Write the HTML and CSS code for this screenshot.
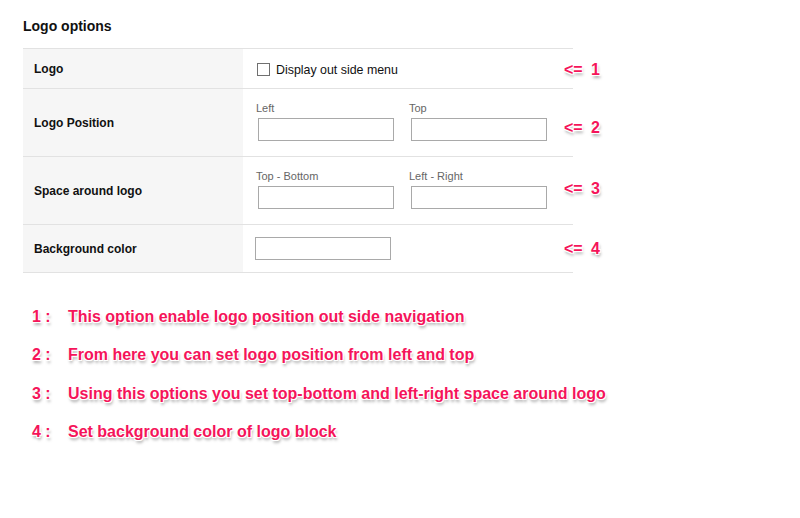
FILE: index.html
```html
<!DOCTYPE html>
<html>
<head>
<meta charset="utf-8">
<link rel="stylesheet" href="styles.css">
</head>
<body>
<div class="page">
  <h2 class="title">Logo options</h2>
  <div class="table">
    <div class="row row-sm">
      <div class="label">Logo</div>
      <div class="cell cell-center">
        <span class="check"></span>
        <span class="check-text">Display out side menu</span>
        <span class="arrow arrow-1">&lt;= <b>1</b></span>
      </div>
    </div>
    <div class="row row-lg">
      <div class="label">Logo Position</div>
      <div class="cell cell-fields">
        <div class="field"><span class="flabel">Left</span><span class="input"></span></div>
        <div class="field"><span class="flabel">Top</span><span class="input"></span></div>
        <span class="arrow arrow-2">&lt;= <b>2</b></span>
      </div>
    </div>
    <div class="row row-lg">
      <div class="label">Space around logo</div>
      <div class="cell cell-fields">
        <div class="field"><span class="flabel">Top - Bottom</span><span class="input"></span></div>
        <div class="field"><span class="flabel">Left - Right</span><span class="input"></span></div>
        <span class="arrow arrow-3">&lt;= <b>3</b></span>
      </div>
    </div>
    <div class="row row-md">
      <div class="label">Background color</div>
      <div class="cell cell-center cell-tight">
        <span class="input"></span>
        <span class="arrow arrow-4">&lt;= <b>4</b></span>
      </div>
    </div>
  </div>
  <div class="notes">
    <div class="note"><span class="num">1 :</span>This option enable logo position out side navigation</div>
    <div class="note"><span class="num">2 :</span>From here you can set logo position from left and top</div>
    <div class="note"><span class="num">3 :</span>Using this options you set top-bottom and left-right space around logo</div>
    <div class="note"><span class="num">4 :</span>Set background color of logo block</div>
  </div>
</div>
</body>
</html>
```

FILE: styles.css
```css
* { box-sizing: border-box; }
html, body { margin: 0; padding: 0; background: #fff; }
body { font-family: "Liberation Sans", Arial, sans-serif; color: #111; }
.page { padding: 18px 0 0 23px; }
.title { margin: 0 0 13px; font-size: 14px; line-height: 17px; font-weight: bold; color: #111; }
.table { width: 550px; border-top: 1px solid #e2e2e2; }
.row { display: flex; border-bottom: 1px solid #e2e2e2; }
.row-sm { height: 40px; }
.row-lg { height: 68px; }
.row-md { height: 48px; }
.label { width: 220px; flex: none; background: #f6f6f6; display: flex; align-items: center; padding-left: 11px; font-size: 12px; font-weight: bold; color: #111; }
.cell { flex: 1; display: flex; padding-left: 13px; }
.cell-center { align-items: center; }
.cell-tight { padding-left: 12px; }
.cell-fields { align-items: flex-end; padding-bottom: 15px; }
.check { width: 13px; height: 13px; border: 1px solid #707070; background: #fff; margin-left: 1px; margin-top: 1px; }
.check-text { font-size: 12.4px; margin-left: 6px; color: #111; margin-top: 3px; }
.field { width: 153px; display: flex; flex-direction: column; }
.flabel { font-size: 11px; line-height: 13px; color: #666; margin-bottom: 3px; }
.input { display: block; width: 136px; height: 23px; border: 1px solid #a9a9a9; background: #fff; margin-left: 2px; }
.cell-tight .input { margin-left: 0; }
.arrow { margin-left: auto; margin-right: -27px; font-size: 16px; line-height: 18px; font-weight: bold; color: #f5145a; white-space: pre; word-spacing: 4px;
  text-shadow: -1px -1px 0 #fff, 1px -1px 0 #fff, -1px 1px 0 #fff, 1px 1px 0 #fff, 1px 3px 3px rgba(0,0,0,0.35); }
.arrow b { font-weight: bold; }
.arrow-1 { margin-top: 2px; }
.arrow-2 { align-self: center; margin-top: 26px; }
.arrow-3 { align-self: center; margin-top: 12px; }
.notes { margin-top: 25px; padding-left: 9px; }
.note { font-size: 16px; line-height: 38.4px; font-weight: bold; color: #f5145a;
  text-shadow: -1px -1px 0 #fff, 1px -1px 0 #fff, -1px 1px 0 #fff, 1px 1px 0 #fff, 1px 3px 3px rgba(0,0,0,0.35); }
.num { display: inline-block; width: 36px; }
```
